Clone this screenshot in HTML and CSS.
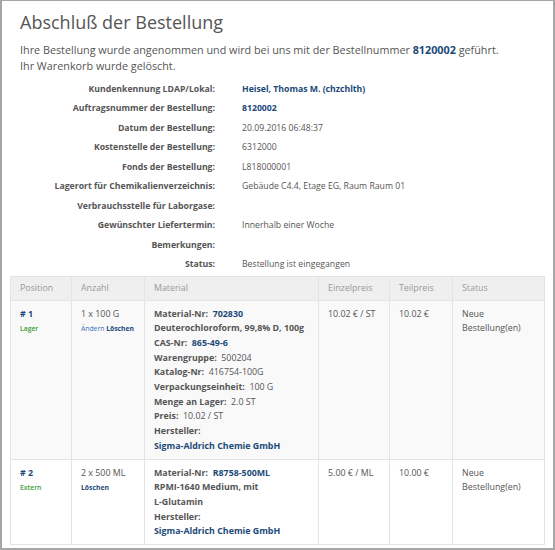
FILE: index.html
```html
<!DOCTYPE html>
<html lang="de">
<head>
  <meta charset="UTF-8">
  <title>Abschluß der Bestellung</title>
  <link rel="stylesheet" href="styles.css">
</head>
<body>
  <div class="page">
    <h1>Abschluß der Bestellung</h1>
    <p class="intro">
      Ihre Bestellung wurde angenommen und wird bei uns mit der Bestellnummer <b class="blue">8120002</b> geführt.<br>
      Ihr Warenkorb wurde gelöscht.
    </p>

    <!-- Order details -->
    <dl class="details">
      <dt>Kundenkennung LDAP/Lokal:</dt><dd><b class="blue">Heisel, Thomas M. (chzchlth)</b></dd>
      <dt>Auftragsnummer der Bestellung:</dt><dd><b class="blue">8120002</b></dd>
      <dt>Datum der Bestellung:</dt><dd>20.09.2016 06:48:37</dd>
      <dt>Kostenstelle der Bestellung:</dt><dd>6312000</dd>
      <dt>Fonds der Bestellung:</dt><dd>L818000001</dd>
      <dt>Lagerort für Chemikalienverzeichnis:</dt><dd>Gebäude C4.4, Etage EG, Raum Raum 01</dd>
      <dt>Verbrauchsstelle für Laborgase:</dt><dd></dd>
      <dt>Gewünschter Liefertermin:</dt><dd>Innerhalb einer Woche</dd>
      <dt>Bemerkungen:</dt><dd></dd>
      <dt>Status:</dt><dd>Bestellung ist eingegangen</dd>
    </dl>

    <!-- Positions -->
    <table class="items">
      <colgroup>
        <col class="c-pos">
        <col class="c-qty">
        <col class="c-mat">
        <col class="c-unit">
        <col class="c-sum">
        <col class="c-status">
      </colgroup>
      <thead>
        <tr>
          <th>Position</th>
          <th>Anzahl</th>
          <th>Material</th>
          <th>Einzelpreis</th>
          <th>Teilpreis</th>
          <th>Status</th>
        </tr>
      </thead>
      <tbody>
        <tr class="odd">
          <td><b class="blue">#&nbsp;1</b><div class="tag green">Lager</div></td>
          <td>1 x 100 G<div class="tag"><a class="light">Ändern</a> <a class="bold">Löschen</a></div></td>
          <td>
            <b>Material-Nr:</b>&nbsp; <b class="blue">702830</b><br>
            <b>Deuterochloroform, 99,8% D, 100g</b><br>
            <b>CAS-Nr:</b>&nbsp; <b class="blue">865-49-6</b><br>
            <b>Warengruppe:</b>&nbsp; 500204<br>
            <b>Katalog-Nr:</b>&nbsp; 416754-100G<br>
            <b>Verpackungseinheit:</b>&nbsp; 100 G<br>
            <b>Menge an Lager:</b>&nbsp; 2.0 ST<br>
            <b>Preis:</b>&nbsp; 10.02 / ST<br>
            <b>Hersteller:</b><br>
            <b class="blue">Sigma-Aldrich Chemie GmbH</b>
          </td>
          <td>10.02 € / ST</td>
          <td>10.02 €</td>
          <td>Neue Bestellung(en)</td>
        </tr>
        <tr>
          <td><b class="blue">#&nbsp;2</b><div class="tag green">Extern</div></td>
          <td>2 x 500 ML<div class="tag"><a class="bold">Löschen</a></div></td>
          <td>
            <b>Material-Nr:</b>&nbsp; <b class="blue">R8758-500ML</b><br>
            <b>RPMI-1640 Medium, mit<br>L-Glutamin</b><br>
            <b>Hersteller:</b><br>
            <b class="blue">Sigma-Aldrich Chemie GmbH</b>
          </td>
          <td>5.00 € / ML</td>
          <td>10.00 €</td>
          <td>Neue Bestellung(en)</td>
        </tr>
      </tbody>
    </table>
  </div>
</body>
</html>
```

FILE: styles.css
```css
html, body {
  margin: 0;
  padding: 0;
}

body {
  font-family: 'Open Sans', sans-serif;
  color: #555;
  background: #fff;
}

.page {
  box-sizing: border-box;
  width: 555px;
  height: 550px;
  border: 2px solid #a6a6a6;
  border-top-width: 1px;
  padding: 0 8px;
  overflow: hidden;
}

h1 {
  margin: 7px 0 0 10px;
  font-size: 18px;
  font-weight: 400;
  line-height: 28px;
  color: #555;
}

.intro {
  margin: 6px 0 0 10px;
  font-size: 10.8px;
  line-height: 16px;
}

.blue {
  color: #1b4a78;
}

/* Order details */
.details {
  display: grid;
  grid-template-columns: 205px 1fr;
  column-gap: 27px;
  margin: 6px 0 0;
  font-size: 8.7px;
  line-height: 19.45px;
}

.details dt {
  text-align: right;
  font-weight: 700;
}

.details dd {
  margin: 0;
}

/* Positions table */
.items {
  table-layout: fixed;
  width: 534px;
  margin-top: 1px;
  border-collapse: collapse;
  font-size: 8.85px;
  line-height: 14.7px;
}

.c-pos { width: 61px; }
.c-qty { width: 73px; }
.c-mat { width: 174px; }
.c-unit { width: 71px; }
.c-sum { width: 63px; }
.c-status { width: 92px; }

.items th,
.items td {
  border: 1px solid #e4e4e4;
  text-align: left;
  vertical-align: top;
  padding: 6px 9px 5px 9px;
}

.items th {
  background: #efefef;
  color: #999;
  font-weight: 400;
  padding: 4px 9px 5px 9px;
  line-height: 14px;
}

.items tr.odd td {
  background: #f9f9f9;
}

.tag {
  font-size: 6.8px;
  line-height: 15px;
}

.tag.green {
  color: #3c9a3c;
  font-weight: 600;
}

.tag a.light {
  color: #3a6fc0;
}

.tag a.bold {
  color: #1b4a78;
  font-weight: 700;
}
```
